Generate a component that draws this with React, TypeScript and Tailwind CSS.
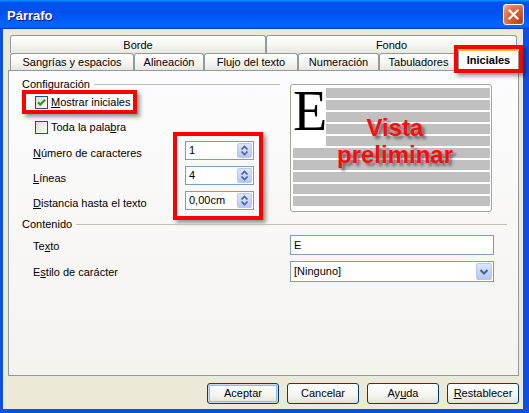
import React from "react";

function U({ children }: { children: React.ReactNode }) {
  return <span className="underline underline-offset-[1px] decoration-1">{children}</span>;
}

function CheckBox({ checked }: { checked?: boolean }) {
  return (
    <span className="w-[13px] h-[13px] border border-[#1c5180] bg-[linear-gradient(135deg,#dcdcd7,#ffffff)] flex items-center justify-center shrink-0">
      {checked && (
        <svg width="11" height="11" viewBox="0 0 11 11">
          <path d="M2 5.2 L4.3 7.6 L9 2.8" fill="none" stroke="#21a121" strokeWidth="2.2" />
        </svg>
      )}
    </span>
  );
}

function Spin({ value }: { value: string }) {
  return (
    <div className="w-[69px] h-[19px] border border-[#7f9db9] bg-white flex items-center pl-[3px] pr-[1px] text-[11px] text-black">
      <span className="flex-1">{value}</span>
      <span className="w-[15px] h-[15px] rounded-[2px] border border-[#b7c8f2] bg-[linear-gradient(to_bottom,#dce6fc,#b4c7f5)] flex items-center justify-center">
        <svg width="13" height="13" viewBox="0 0 13 13">
          <path d="M3.5 5.5 L6.5 2.5 L9.5 5.5" fill="none" stroke="#4d6185" strokeWidth="1.6" />
          <path d="M3.5 7.5 L6.5 10.5 L9.5 7.5" fill="none" stroke="#4d6185" strokeWidth="1.6" />
        </svg>
      </span>
    </div>
  );
}

function Bar() {
  return <div className="h-[10px] bg-[#c0c0c0]" />;
}

const tab =
  "border border-b-0 border-[#919b9c] rounded-t-[3px] bg-[linear-gradient(to_bottom,#ffffff,#f5f5f1_55%,#e8e7e0)] flex items-center justify-center text-[11px] text-black shrink-0";

function Btn({ children, def }: { children: React.ReactNode; def?: boolean }) {
  return (
    <div
      className={
        "w-[72px] h-[21px] rounded-[3px] border border-[#003c74] bg-[linear-gradient(to_bottom,#ffffff,#f4f4f0_60%,#e3e1d8)] flex items-center justify-center text-[11px] text-black " +
        (def ? "shadow-[inset_0_0_0_1px_#c9daf7,inset_0_0_0_2px_#98b8ea]" : "")
      }
    >
      {children}
    </div>
  );
}

export default function App() {
  return (
    <div className="relative w-[529px] h-[413px] bg-[#0b4fe4] flex flex-col overflow-hidden font-['Liberation_Sans',Arial,sans-serif]">
      {/* Title bar */}
      <div className="h-[29px] shrink-0 flex items-center justify-between pl-[7px] pr-[5px] bg-[linear-gradient(to_bottom,#0997ff,#0053ee_8%,#0050ee_40%,#0066ff_88%,#0066ff_93%,#005bff_95%,#003dd7_96%,#003dd7)]">
        <span className="mt-[2px] text-[13px] font-bold text-white [text-shadow:1px_1px_#0f1089]">Párrafo</span>
        <div className="w-[21px] h-[21px] rounded-[3px] border border-white bg-[radial-gradient(circle_at_85%_85%,#c13f12_0%,#e0653a_55%,#ea8a66_80%,#f6c2ac_100%)] flex items-center justify-center">
          <svg width="13" height="13" viewBox="0 0 13 13">
            <path d="M2.5 2.5 L10.5 10.5 M10.5 2.5 L2.5 10.5" stroke="#ffffff" strokeWidth="2.2" strokeLinecap="square" />
          </svg>
        </div>
      </div>

      {/* Body */}
      <div className="flex-1 ml-[3px] mr-[6px] mb-[4px] bg-[#ece9d8] pl-[5px] pr-[4px] pt-[6px] flex flex-col">
        {/* Tabs */}
        <div className="ml-[2px]">
          <div className="flex h-[18px]">
            <div className={tab + " w-[256px] h-[18px] pt-px"}>Borde</div>
            <div className={tab + " w-[251px] h-[18px] pt-px"}>Fondo</div>
          </div>
          <div className="flex h-[17px] items-start">
            <div className={tab + " w-[124px] h-[17px]"}>Sangrías y espacios</div>
            <div className={tab + " w-[70px] h-[17px]"}>Alineación</div>
            <div className={tab + " w-[94px] h-[17px]"}>Flujo del texto</div>
            <div className={tab + " w-[81px] h-[17px]"}>Numeración</div>
            <div className={tab + " w-[79px] h-[17px]"}>Tabuladores</div>
            <div className="relative z-10 w-[61px] h-[23px] -mt-[5px] shrink-0 border-x border-[#919b9c] rounded-t-[3px] bg-[#fcfcfe] flex flex-col">
              <div className="h-[3px] rounded-t-[3px] bg-[linear-gradient(to_bottom,#e68b2c,#ffc73c)] -mx-px" />
              <div className="flex-1 flex items-center justify-center text-[11px] font-bold text-black pb-[2px]">
                Iniciales
              </div>
            </div>
          </div>
        </div>

        {/* Panel */}
        <div className="h-[306px] shrink-0 border border-[#919b9c] bg-[linear-gradient(to_bottom,#fcfcfe,#f4f3ee)] pl-[13px] pt-[7px] pr-[11px] text-[11px] text-black">
          <div className="flex h-[141px]">
            {/* Left column */}
            <div className="w-[258px] flex flex-col">
              <div className="flex items-center h-[12px] gap-[4px]">
                <span className="leading-[12px]">Configuración</span>
                <div className="flex-1 h-px bg-[#c2c0b4]" />
              </div>
              <div className="w-[115px] h-[24px] border-[4px] border-[#ff0000] shadow-[3px_3px_4px_rgba(0,0,0,0.4)] flex items-center pl-[9px] gap-[3px]">
                <CheckBox checked />
                <span>
                  <U>M</U>ostrar iniciales
                </span>
              </div>
              <div className="mt-[7px] -mb-[2px] h-[13px] flex items-center pl-[13px] gap-[3px]">
                <CheckBox />
                <span>
                  Toda la pala<U>b</U>ra
                </span>
              </div>
              <div className="flex">
                <div className="w-[151px] pl-[11px] pt-[12px] flex flex-col gap-[6px]">
                  <div className="h-[19px] flex items-center">
                    <span>
                      <U>N</U>úmero de caracteres
                    </span>
                  </div>
                  <div className="h-[19px] flex items-center">
                    <span>
                      <U>L</U>íneas
                    </span>
                  </div>
                  <div className="h-[19px] flex items-center">
                    <span>
                      <U>D</U>istancia hasta el texto
                    </span>
                  </div>
                </div>
                <div className="w-[90px] h-[88px] border-[4px] border-[#ff0000] shadow-[3px_3px_4px_rgba(0,0,0,0.4)] pt-[5px] pl-[8px] flex flex-col gap-[6px]">
                  <Spin value="1" />
                  <Spin value="4" />
                  <Spin value="0,00cm" />
                </div>
              </div>
            </div>

            {/* Preview */}
            <div className="ml-[10px] mt-[6px] w-[202px] h-[128px] border border-[#a7a69c] rounded-[3px] bg-white relative pt-[3px] pl-[2px] pr-[1px]">
              <div className="flex">
                <div className="w-[33px] h-[58px] font-['Liberation_Serif','Times_New_Roman',serif] text-[56px] leading-[46px] text-black">
                  E
                </div>
                <div className="flex-1 flex flex-col gap-[2px]">
                  <Bar />
                  <Bar />
                  <Bar />
                  <Bar />
                  <Bar />
                </div>
              </div>
              <div className="flex flex-col gap-[2px] mt-[2px]">
                <Bar />
                <Bar />
                <Bar />
                <Bar />
                <Bar />
              </div>
              <div className="absolute left-0 right-0 top-[29px] pl-[8px] text-center text-[24px] leading-[27px] font-bold text-[#ff0a0a] [text-shadow:3px_3px_3px_rgba(0,0,0,0.45)]">
                Vista
                <br />
                preliminar
              </div>
            </div>
          </div>

          {/* Contenido */}
          <div className="-mt-[1px] flex items-center h-[12px] gap-[4px]">
            <span className="leading-[12px]">Contenido</span>
            <div className="flex-1 h-px bg-[#c2c0b4]" />
          </div>
          <div className="mt-[5px] flex items-center h-[20px]">
            <div className="w-[268px] pl-[11px] pt-[2px]">
              Te<U>x</U>to
            </div>
            <div className="w-[204px] h-[20px] border border-[#7f9db9] bg-white flex items-center pl-[3px]">E</div>
          </div>
          <div className="mt-[6px] flex items-center h-[21px]">
            <div className="w-[268px] pl-[11px] pt-[2px]">
              E<U>s</U>tilo de carácter
            </div>
            <div className="w-[204px] h-[21px] border border-[#7f9db9] bg-white flex items-center pl-[3px] pr-px">
              <span className="flex-1">[Ninguno]</span>
              <span className="w-[16px] h-[17px] rounded-[2px] border border-[#b7c8f2] bg-[linear-gradient(to_bottom,#dce6fc,#b4c7f5)] flex items-center justify-center">
                <svg width="10" height="8" viewBox="0 0 10 8">
                  <path d="M1.5 2 L5 5.5 L8.5 2" fill="none" stroke="#4d6185" strokeWidth="2" />
                </svg>
              </span>
            </div>
          </div>
        </div>

        {/* Buttons */}
        <div className="mt-[7px] flex justify-end gap-[8px]">
          <Btn def>Aceptar</Btn>
          <Btn>Cancelar</Btn>
          <Btn>
            Ay<U>u</U>da
          </Btn>
          <Btn>
            <U>R</U>establecer
          </Btn>
        </div>
      </div>

      {/* Red highlight around selected tab */}
      <div className="absolute left-[454px] top-[45px] w-[69px] h-[28px] border-[4px] border-[#ff0000] shadow-[3px_3px_4px_rgba(0,0,0,0.4)] z-20 pointer-events-none" />
    </div>
  );
}
